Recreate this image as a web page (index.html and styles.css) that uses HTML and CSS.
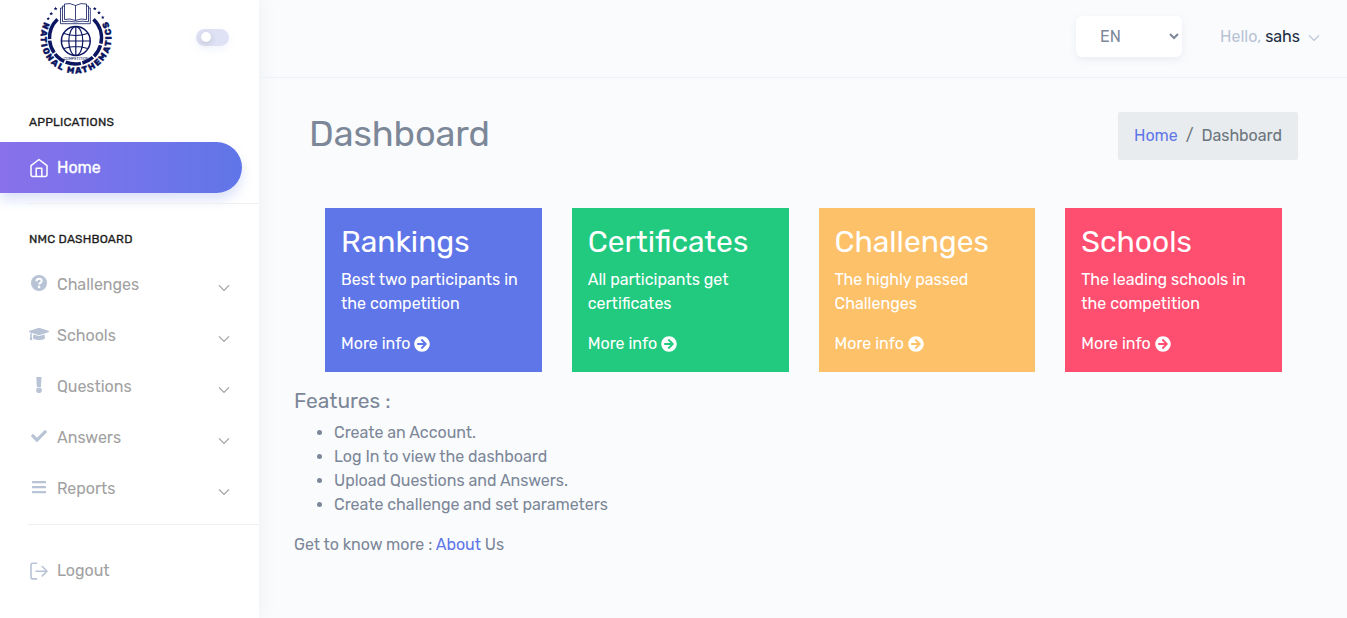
FILE: index.html
```
<!DOCTYPE html>
<html lang="en">
<head>
<meta charset="utf-8">
<title>Dashboard</title>
<link rel="stylesheet" href="styles.css">
</head>
<body>
<svg class="defs" width="0" height="0">
  <symbol id="chev" viewBox="0 0 12 8"><path d="M1 1.300 6 6.300 11 1.300" fill="none" stroke="currentColor" stroke-width="1.200"/></symbol>
  <symbol id="go" viewBox="0 0 512 512"><path fill="currentColor" d="M256 8c137 0 248 111 248 248S393 504 256 504 8 393 8 256 119 8 256 8zm-28.900 143.600l75.500 72.400H120c-13.300 0-24 10.700-24 24v16c0 13.300 10.700 24 24 24h182.600l-75.500 72.400c-9.700 9.300-9.900 24.800-.4 34.300l11 10.900c9.400 9.400 24.600 9.400 33.900 0L404.300 273c9.400-9.400 9.400-24.600 0-33.900L271.600 106.300c-9.400-9.400-24.600-9.400-33.900 0l-11 10.900c-9.500 9.600-9.300 25.100.4 34.400z"/></symbol>
  <symbol id="star" viewBox="0 0 10 10"><path fill="#0b1560" d="M5 0 6.300 3.500 10 3.700 7.100 6 8.100 9.700 5 7.600 1.900 9.700 2.900 6 0 3.700 3.700 3.500z"/></symbol>
</svg>
<div class="app">
  <aside class="sidebar">
    <div class="brand">
      <svg class="logo" width="76" height="76" viewBox="38 0 76 76">
        <path id="ring" d="M45 20.700A35.500 35.500 0 1 0 107 20.700" fill="none"/>
        <text class="ring-text"><textPath href="#ring" startOffset="1.500" textLength="145" lengthAdjust="spacing">NATIONAL MATHEMATICS</textPath></text>
        <g fill="none" stroke="#0b1560">
          <path stroke-width="3.500" stroke-dasharray="22 1.500 13 1.500 12 1.500 15.500 1.500 12 1.500 13 1.500 30" d="M57.500 19.200A26 26 0 1 0 93.500 19.200"/>
          <circle cx="75.800" cy="41" r="14.400" stroke-width="1.500"/>
          <ellipse cx="75.800" cy="41" rx="7" ry="14.400" stroke-width="1.200"/>
          <path stroke-width="1.200" d="M75.800 26.500v29M61.500 41h28.800M64 33.500q11.800 4 23.600 0M64 48.500q11.800-4 23.600 0"/>
          <path stroke-width=".8" d="M75.500 5.500Q70 2.500 64.500 4V19.500Q70 18 75.500 20.500Q81 18 86.500 19.500V4Q81 2.500 75.500 5.500V20.500M64.500 6H62.500V21.700Q69 20.500 75.500 22Q82 20.500 88.500 21.700V6H86.500M62.500 8H60.500V23.700H90.300V8H88.500"/>
        </g>
        <use href="#star" x="53.600" y="6.500" width="4" height="4"/><use href="#star" x="49.200" y="11.500" width="4" height="4"/><use href="#star" x="46.400" y="16.800" width="3.600" height="3.600"/>
        <use href="#star" x="92.800" y="6.500" width="4" height="4"/><use href="#star" x="97" y="10.600" width="4" height="4"/><use href="#star" x="101" y="15.500" width="3.600" height="3.600"/>
        <text class="tiny" x="63.500" y="59.500" textLength="25" lengthAdjust="spacingAndGlyphs">COMPETITION</text>
      </svg>
      <div class="toggle"><span class="knob"></span></div>
    </div>
    <nav>
      <div class="caption first">APPLICATIONS</div>
      <a class="item active"><svg class="ic" width="20" height="20" viewBox="0 0 20 20" fill="none" stroke="currentColor" stroke-width="1.500"><path d="M2 7.700 10 1.500 18 7.700V16.500a2 2 0 0 1-2 2H4a2 2 0 0 1-2-2zM7.200 18.500V10.200h5.600v8.300" stroke-linejoin="round"/></svg><span>Home</span></a>
      <div class="rule"></div>
      <div class="caption">NMC DASHBOARD</div>
      <a class="item"><svg class="ic up" width="20" height="16" viewBox="0 0 20 16"><circle cx="10" cy="8" r="8" fill="currentColor"/><path d="M7.300 6.200C7.600 4.600 8.600 3.800 10 3.800c1.500 0 2.700.9 2.700 2.300 0 1.900-2.500 1.700-2.500 3.400" fill="none" stroke="#fff" stroke-width="1.900"/><circle cx="10.100" cy="11.900" r="1.300" fill="#fff"/></svg><span>Challenges</span><svg class="chev"><use href="#chev"/></svg></a>
      <a class="item"><svg class="ic up" width="20" height="16" viewBox="0 0 640 512"><path fill="currentColor" d="M622.300 153.200L343 67.500c-15-4.600-31.100-4.600-46.100 0L17.700 153.200c-23.600 7.200-23.600 38.400 0 45.600l48.700 15c-10.700 13.200-17.200 29.200-17.800 46.900C38.700 266.300 32 276.300 32 288c0 10.600 5.700 19.500 13.800 25.300L20.300 428.500C18.100 438.500 25.700 448 36 448h56c10.200 0 17.800-9.500 15.600-19.500L82.200 313.300C90.300 307.500 96 298.600 96 288c0-11.400-6.500-21-15.700-26.500.8-15 8.400-28.200 20.700-36.700L297 284.500c9.100 2.800 26.500 6.500 46.100 0l279.400-85.700c23.500-7.200 23.500-38.400-.2-45.600zM352.800 315.100c-28.500 8.800-52.800 3.700-65.600 0L142.400 270.600 128 384c0 35.300 86 64 192 64s192-28.700 192-64l-14.400-113.400-144.800 44.500z"/></svg><span>Schools</span><svg class="chev"><use href="#chev"/></svg></a>
      <a class="item"><svg class="ic up" width="20" height="16" viewBox="0 0 20 16" fill="currentColor"><path d="M7.300 0h5.200l-.6 9.900H7.900z"/><circle cx="10" cy="13.200" r="2.800"/></svg><span>Questions</span><svg class="chev"><use href="#chev"/></svg></a>
      <a class="item"><svg class="ic up" width="20" height="16" viewBox="0 0 512 512"><path fill="currentColor" d="M173.900 439.400l-166.400-166.400c-10-10-10-26.200 0-36.200l36.200-36.200c10-10 26.200-10 36.200 0L192 312.700 432.100 72.600c10-10 26.200-10 36.200 0l36.200 36.200c10 10 10 26.200 0 36.200L210.100 439.400c-10 10-26.200 10-36.200 0z"/></svg><span>Answers</span><svg class="chev"><use href="#chev"/></svg></a>
      <a class="item"><svg class="ic up" width="20" height="16" viewBox="0 0 20 16" fill="currentColor"><rect x="3" y="2" width="14" height="2.200" rx=".5"/><rect x="3" y="7" width="14" height="2.200" rx=".5"/><rect x="3" y="12" width="14" height="2.200" rx=".5"/></svg><span>Reports</span><svg class="chev"><use href="#chev"/></svg></a>
      <div class="rule"></div>
      <a class="item logout"><svg class="ic" width="20" height="20" viewBox="0 0 20 20" fill="none" stroke="currentColor" stroke-width="1.600" stroke-linecap="round" stroke-linejoin="round"><path d="M7.500 2.200H3.500Q2 2.200 2 4v12.200Q2 17.900 3.500 17.900h4M7 10.200h11M13.300 5.500 18 10.200l-4.700 4.700"/></svg><span>Logout</span></a>
    </nav>
  </aside>
  <div class="page">
    <header class="topbar">
      <select class="lang"><option>EN</option></select>
      <div class="user"><span class="hello">Hello,</span> <span class="name">sahs</span><svg class="chev"><use href="#chev"/></svg></div>
    </header>
    <main>
      <div class="head">
        <h1>Dashboard</h1>
        <div class="crumbs"><a class="link">Home</a><span class="slash">/</span><span>Dashboard</span></div>
      </div>
      <section class="cards">
        <article class="card blue"><h3>Rankings</h3><p>Best two participants in<br>the competition</p><a class="more">More info <svg width="16" height="16"><use href="#go"/></svg></a></article>
        <article class="card green"><h3>Certificates</h3><p>All participants get<br>certificates</p><a class="more">More info <svg width="16" height="16"><use href="#go"/></svg></a></article>
        <article class="card amber"><h3>Challenges</h3><p>The highly passed<br>Challenges</p><a class="more">More info <svg width="16" height="16"><use href="#go"/></svg></a></article>
        <article class="card red"><h3>Schools</h3><p>The leading schools in<br>the competition</p><a class="more">More info <svg width="16" height="16"><use href="#go"/></svg></a></article>
      </section>
      <section class="features">
        <h4>Features :</h4>
        <ul><li>Create an Account.</li><li>Log In to view the dashboard</li><li>Upload Questions and Answers.</li><li>Create challenge and set parameters</li></ul>
        <p>Get to know more : <a class="link">About</a> Us</p>
      </section>
    </main>
  </div>
</div>
</body>
</html>
```
FILE: styles.css
```
* { box-sizing: border-box; }
body { margin: 0; background: #fafbfd; color: #7c8798; font: 400 16px/24px Rubik, Roboto, sans-serif; letter-spacing: -.02px; font-variant-ligatures: common-ligatures; overflow: hidden; }
h1, h3, h4, p, ul { margin: 0; font-weight: 400; }
.defs { position: absolute; }
.app { display: flex; height: 618px; }
.sidebar { width: 259px; flex: none; background: #fff; box-shadow: 1px 0 20px rgba(0, 0, 0, .05); }
.brand { height: 78px; padding: 0 30px 0 38px; display: flex; justify-content: space-between; align-items: flex-start; }
.logo { overflow: visible; }
.ring-text { font: 800 8.800px Rubik, Roboto, sans-serif; fill: #0b1560; stroke: #0b1560; stroke-width: .3px; }
.tiny { font: 4.200px Rubik, Roboto, sans-serif; fill: #0b1560; }
.toggle { width: 33px; height: 17px; margin-top: 29px; border-radius: 9px; background: #dfe2f5; padding: 3px 5px; box-shadow: 0 3px 8px rgba(95, 118, 232, .08); }
.knob { display: block; width: 10px; height: 10px; border-radius: 50%; background: #fff; box-shadow: 0 2px 6px rgba(0, 0, 0, .15); }
.caption { padding: 25px 29px 10px; height: 55px; font-size: 12px; line-height: 20px; font-weight: 400; color: #1c1c1c; letter-spacing: .2px; -webkit-text-stroke: .3px; }
.caption.first { height: 64px; padding-top: 34px; }
.item { display: flex; align-items: center; height: 51px; padding: 0 29px; color: #a1a1a1; }
.item .ic { margin-right: 8px; color: #b8c3d5; flex: none; }
.item .ic.up { margin-top: -3px; }
.chev { width: 12px; height: 8px; flex: none; }
.item .chev { margin: 7px .5px 0 auto; }
.item.active { width: 242px; border-radius: 0 60px 60px 0; background: linear-gradient(to right, #8971ea, #7f72ea, #7574ea, #6a75e9, #5f76e8); color: #fff; -webkit-text-stroke: .3px; box-shadow: 0 7px 12px rgba(95, 118, 232, .21); }
.item.active .ic { color: #fff; }
.rule { height: 1px; margin: 10px 0 0 28px; background: #efefef; }
.logout { margin-top: 20px; }
.page { flex: 1; }
.topbar { height: 78px; padding-right: 27px; border-bottom: 1px solid #edf2f9; display: flex; justify-content: flex-end; align-items: flex-start; }
.lang { width: 106px; height: 41px; margin-top: 16px; padding: 0 0 0 20px; border: 0; border-radius: 6px; background-color: #fff; color: #7c8798; font: 16px Rubik, Roboto, sans-serif; box-shadow: 0 3px 9px rgba(162, 176, 190, .18); }
.user { margin: 25px 0 0 38px; display: flex; gap: 4px; align-items: center; }
.hello { color: #b8c3d5; }
.name { color: #1c2d41; }
.user .chev { margin: 2px 0 0 4px; color: #b8c3d5; }
main { padding: 34px 49px 0 35px; }
.head { display: flex; justify-content: space-between; align-items: flex-start; padding-left: 15px; }
h1 { font-size: 36px; line-height: 43px; letter-spacing: -.1px; }
.crumbs { display: flex; width: 180px; height: 48px; padding: 12px 16px; border-radius: 2px; background: #e8ecef; color: #6c757d; white-space: nowrap; }
.slash { padding: 0 8px; }
.link { color: #5f76e8; }
.cards { display: grid; grid-template-columns: repeat(4, 1fr); gap: 30px; margin-top: 48px; padding: 0 16px 0 31px; }
.card { height: 164px; padding: 16px 0 0 16px; color: #fff; white-space: nowrap; letter-spacing: 0; }
.card h3 { font-size: 30px; line-height: 36px; }
.card p { margin: 8px 0 16px; }
.more { display: flex; align-items: center; gap: 4px; }
.blue { background: #5f76e8; }
.green { background: #22ca80; }
.amber { background: #fdc16a; }
.red { background: #ff4f70; }
.features h4 { font-size: 21px; line-height: 26px; margin: 16px 0 7px; }
.features ul { padding-left: 40px; margin-bottom: 16px; }
```
